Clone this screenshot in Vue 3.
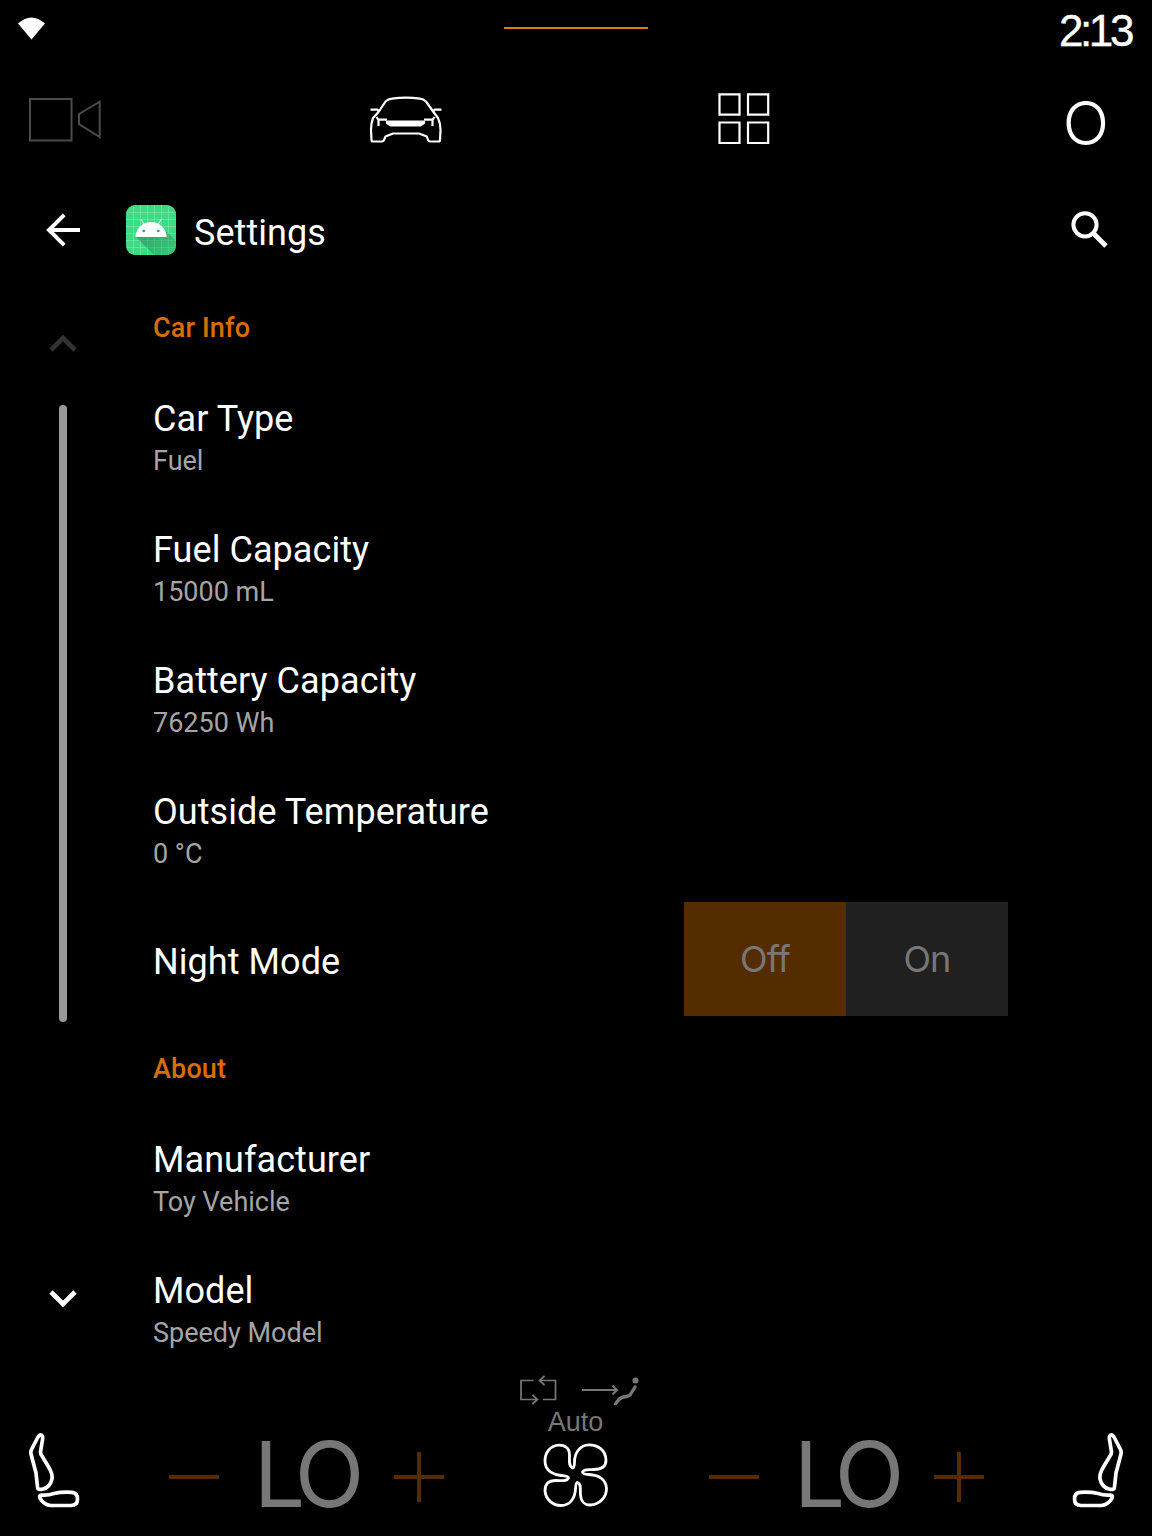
<script setup>
const carInfo = [
  { title: 'Car Type', value: 'Fuel' },
  { title: 'Fuel Capacity', value: '15000 mL' },
  { title: 'Battery Capacity', value: '76250 Wh' },
  { title: 'Outside Temperature', value: '0 °C' },
]
const about = [
  { title: 'Manufacturer', value: 'Toy Vehicle' },
  { title: 'Model', value: 'Speedy Model' },
]
</script>

<template>
  <div class="screen">
    <div class="status">
      <svg class="wifi" width="27" height="23" viewBox="0 0 27 23"><path d="M0 6.5Q13.500-5.500 27 6.500L13.500 22.500Z" fill="#fff" /></svg>
      <div class="handle"></div>
      <div class="clock">2:13</div>
    </div>

    <nav class="nav">
      <svg class="camera" width="74" height="46" viewBox="0 0 74 46" fill="none" stroke="#4b4b4b" stroke-width="2">
        <path d="M2 2H43.500V43.500H2ZM51 17L71.700 4.700V40L51 27.200Z" />
      </svg>
      <svg class="car" width="76" height="50" viewBox="0 0 76 50" fill="none" stroke="#fff" stroke-width="2.200" stroke-linejoin="round">
        <path d="M10.500 16L17.500 5.500Q20 3 24 2.700Q38 .7 52 2.700Q55.500 3 58 5.500L65.500 16L70 22Q72.500 27 72.500 34L72 44Q72 45.500 70.500 45.500H62Q60.500 45.500 60 44L58.800 40.500L51 37.500H25L17.500 40.500L16 44Q15.500 45.500 14 45.500H5Q3.500 45.500 3.500 44L3 34Q3 27 5 22Z" />
        <path d="M2.500 13.700H9.500L11 16M73.500 13.700H66.500L65 16M8.500 21L10.500 24V30M10.500 23.700H19M66.500 21L64.500 24V30M64.500 23.700H56" />
        <path d="M19 25.500H56V27L52 29.500H23L19 27Z" fill="#fff" />
      </svg>
      <svg class="grid" width="54" height="54" viewBox="0 0 54 54" fill="none" stroke="#fff" stroke-width="2.200">
        <path d="M2.500 3.300H22.500V23.700H2.500ZM31 3.300H51.200V23.700H31ZM2.500 31.500H22.500V52H2.500ZM31 31.500H51.200V52H31Z" />
      </svg>
      <div class="profile">O</div>
    </nav>

    <header class="toolbar">
      <svg class="back" width="36" height="36" viewBox="0 0 36 36" fill="none" stroke="#fff" stroke-width="4">
        <path d="M35 18H4M19.200 2.800L4 18L19.200 33.200" />
      </svg>
      <svg class="appicon" width="50" height="50" viewBox="0 0 50 50">
        <defs>
          <clipPath id="tile"><rect width="50" height="50" rx="9" /></clipPath>
          <linearGradient id="shade" x1="0" y1="0" x2="1" y2="1">
            <stop offset="0" stop-color="#1f8250" stop-opacity=".65" />
            <stop offset="1" stop-color="#1f8250" stop-opacity=".2" />
          </linearGradient>
        </defs>
        <g clip-path="url(#tile)">
          <rect width="50" height="50" fill="#3ddc84" />
          <path d="M7.500 0V50M14.500 0V50M21.500 0V50M28.500 0V50M35.500 0V50M42.500 0V50M0 7.500H50M0 14.500H50M0 21.500H50M0 28.500H50M0 35.500H50M0 42.500H50" stroke="#fff" stroke-opacity=".25" stroke-width=".8" />
          <path d="M10 32L28 50H50V36L37 23L40 32Z" fill="url(#shade)" />
          <path d="M9.500 32A15.600 15 0 0 1 40.700 32Z" fill="#fff" />
          <path d="M18.500 20L15.200 14.500M31.700 20L35 14.500" stroke="#fff" stroke-width="1.100" />
          <circle cx="17.800" cy="26" r="1.300" fill="#2f9e64" /><circle cx="32.300" cy="26" r="1.300" fill="#2f9e64" />
        </g>
      </svg>
      <h1>Settings</h1>
      <svg class="search" width="40" height="40" viewBox="0 0 40 40" fill="none" stroke="#fff">
        <circle cx="15" cy="14.800" r="11.600" stroke-width="4" />
        <path d="M23.300 23.300L36 36" stroke-width="4.800" />
      </svg>
    </header>

    <main class="body">
      <aside class="rail">
        <svg width="28" height="18" viewBox="0 0 28 18" fill="none" stroke="#333" stroke-width="4.600"><path d="M2 15L14 3L26 15" /></svg>
        <div class="thumb"></div>
        <svg width="28" height="18" viewBox="0 0 28 18" fill="none" stroke="#fff" stroke-width="4.600"><path d="M2 3L14 15L26 3" /></svg>
      </aside>
      <section class="list">
        <h2>Car Info</h2>
        <div v-for="row in carInfo" :key="row.title" class="row">
          <div class="title">{{ row.title }}</div>
          <div class="value">{{ row.value }}</div>
        </div>
        <div class="toggle-row">
          <div class="title">Night Mode</div>
          <div class="toggle"><span class="off">Off</span><span class="on">On</span></div>
        </div>
        <h2>About</h2>
        <div v-for="row in about" :key="row.title" class="row">
          <div class="title">{{ row.title }}</div>
          <div class="value">{{ row.value }}</div>
        </div>
      </section>
    </main>

    <footer class="climate">
      <svg class="seat" width="54" height="78" viewBox="0 0 54 78" fill="none" stroke="#fff" stroke-width="3.700" stroke-linejoin="round">
        <path d="M12 5Q14.500 1.200 16.300 4Q17 5 16.600 7L14.500 20Q14.500 22 16 24L22 34Q27 42 26 47Q24 55.500 17 57Q11.500 58.500 11.500 55L10 41L5 22Q4.500 20 5.300 18Z" />
        <path d="M16 63Q22 63.500 28 61.500Q36 59.500 46 60.300Q51.500 61 51.500 67Q51.500 73.500 45 73.500H25Q20 73.500 15.500 68.500Q11.500 63 16 63Z" />
      </svg>
      <div class="zone left">
        <i class="minus"></i>
        <span class="temp">LO</span>
        <i class="plus"></i>
      </div>
      <div class="fan">
        <div class="modes">
          <svg width="38" height="30" viewBox="0 0 38 30" fill="none" stroke="#777" stroke-width="1.700">
            <path d="M14.500 5.500H2V24.500H18M13.500 20L18.500 24.500L13.500 29M24 24.500H36.500V5.500H20.500M25.500 1L20.500 5.500L25.500 10" />
          </svg>
          <svg width="58" height="30" viewBox="0 0 58 30" fill="none" stroke="#777">
            <path d="M1 15H36M31.500 10.500L36 15L31.500 19.500" stroke-width="2" />
            <path d="M34.500 29Q38.500 22.500 42.500 22Q48.500 21.500 50 18.500L54 12" stroke-width="3.300" stroke-linecap="round" />
            <circle cx="54.500" cy="5.500" r="3" fill="#777" stroke="none" />
          </svg>
        </div>
        <div class="auto">Auto</div>
        <svg class="blades" width="68" height="68" viewBox="0 0 68 68" fill="none" stroke="#fff" stroke-width="2.800" stroke-linejoin="round">
          <path d="M30.500 26C26.500 24 27.500 19 27.500 13C27.500 5 22 3 17 3.200C8 3.500 3 11 3 19C3 30 13 33 19 33.500C23 34 26.500 34 26.500 36C25 39.500 20 38.500 14 38.500C5 38.500 3 43 3 49C4 58 11 63.500 19 63.500C29 63.500 33 55 33.500 47C33.700 43 34 40.500 35.500 40.500C39.500 42 38 47 38.500 53C39 59.500 43 63 48 63C58 62.500 64.500 55 64.500 46.500C64 37 56 33 47 32.500C43 32.300 40.500 32 40.500 30C42 26.500 47 28 52 27.500C60 27.500 64 24 64 18C63.500 8 56 2.800 47 2.800C37 3 32.500 12 32.500 20C32.500 24 32 26 30.500 26Z" />
        </svg>
      </div>
      <div class="zone right">
        <i class="minus"></i>
        <span class="temp">LO</span>
        <i class="plus"></i>
      </div>
      <svg class="seat flipped" width="54" height="78" viewBox="0 0 54 78" fill="none" stroke="#fff" stroke-width="3.700" stroke-linejoin="round">
        <path d="M12 5Q14.500 1.200 16.300 4Q17 5 16.600 7L14.500 20Q14.500 22 16 24L22 34Q27 42 26 47Q24 55.500 17 57Q11.500 58.500 11.500 55L10 41L5 22Q4.500 20 5.300 18Z" />
        <path d="M16 63Q22 63.500 28 61.500Q36 59.500 46 60.300Q51.500 61 51.500 67Q51.500 73.500 45 73.500H25Q20 73.500 15.500 68.500Q11.500 63 16 63Z" />
      </svg>
    </footer>
  </div>
</template>

<style>
body { margin: 0; background: #000; }
</style>

<style scoped>
.screen { width: 1152px; height: 1536px; background: #000; color: #fff; font-family: Roboto, sans-serif; overflow: hidden; display: flex; flex-direction: column; }
svg { display: block; flex: none; }

.status { height: 60px; display: grid; grid-template-columns: 1fr 144px 1fr; padding: 0 18px; box-sizing: border-box; }
.wifi { margin-top: 17px; }
.handle { height: 2px; margin-top: 27px; background: #e57a10; }
.clock { justify-self: end; margin: 6px 3px 0 0; font: 44px/50px "Liberation Sans", sans-serif; letter-spacing: -3.400px; -webkit-text-stroke: .4px #fff; }

.nav { height: 122px; display: flex; align-items: flex-start; padding: 36px 43px 0 28px; box-sizing: border-box; }
.camera { margin-top: 1px; }
.car { margin-left: 265.500px; }
.grid { margin: -5px 0 0 273.500px; }
.profile { margin-left: auto; font: 300 61px/54px Inter, sans-serif; }

.toolbar { height: 103px; display: flex; align-items: flex-start; padding: 23px 42px 0 45px; box-sizing: border-box; }
.back { margin-top: 7px; }
.appicon { margin-left: 45px; }
h1 { margin: 7px 0 0 18px; font-size: 36px; line-height: 42px; font-weight: 400; letter-spacing: .05px; }
.search { margin: 5px 0 0 auto; }

.body { height: 1090px; flex: none; display: flex; }
.rail { width: 126px; display: flex; flex-direction: column; align-items: center; padding-top: 50px; box-sizing: border-box; }
.thumb { width: 8px; height: 617px; border-radius: 4px; background: #999; margin: 52px 0 267px; }
.list { flex: 1; padding: 0 144px 0 27px; }
h2 { margin: 0; height: 84px; box-sizing: border-box; padding-top: 27px; font-size: 27px; line-height: 32px; font-weight: 500; letter-spacing: .15px; color: #d96d00; }
.row { height: 131px; box-sizing: border-box; padding-top: 29px; }
.title { font-size: 36px; line-height: 43px; letter-spacing: .06px; }
.value { font-size: 27px; line-height: 32px; margin-top: 4px; color: #a5a5a5; }
.toggle-row { height: 133px; padding-top: 9px; box-sizing: border-box; display: flex; justify-content: space-between; align-items: flex-start; }
.toggle-row .title { margin-top: 39px; }
.toggle { display: flex; font: 400 36px/115px Inter, sans-serif; letter-spacing: -1px; color: #777; text-align: center; }
.toggle span { width: 162px; height: 114px; }
.off { background: #552b00; }
.on { background: #202020; }

.climate { flex: 1; display: flex; align-items: flex-start; padding: 0 26px; }
.seat { margin-top: 57px; }
.flipped { margin-left: auto; transform: scaleX(-1); }
.zone { width: 275px; margin-top: 54px; height: 96px; display: flex; justify-content: space-between; align-items: center; }
.left { margin-left: 88.500px; }
.right { margin-left: 72.500px; }
.temp { font: 400 91px/96px Inter, sans-serif; letter-spacing: -8px; color: #777; margin: -6px 0 0 -2px; }
.minus, .plus { width: 50px; height: 50px; background: linear-gradient(#552b00, #552b00) center / 50px 4px no-repeat; }
.plus { background: linear-gradient(#552b00, #552b00) center / 50px 4px no-repeat, linear-gradient(#552b00, #552b00) center / 4px 50px no-repeat; }
.fan { width: 120px; margin-left: 72.500px; display: flex; flex-direction: column; align-items: center; }
.modes { display: flex; gap: 24px; margin: 0 0 0 6px; }
.auto { margin: 1px 0 0 -1px; font: 27px/32px "Liberation Sans", sans-serif; color: #777; }
.blades { margin-top: 4px; }
</style>
